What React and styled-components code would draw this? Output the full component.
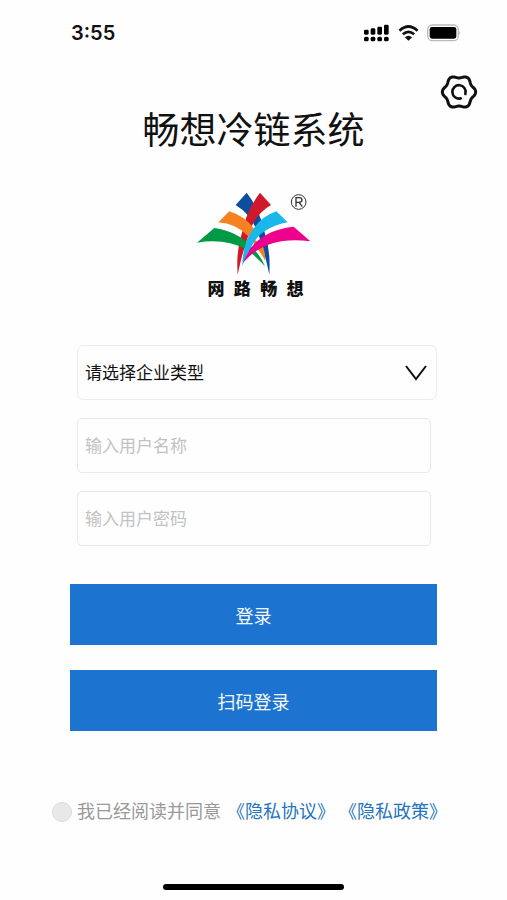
import React from "react";
import styled, { createGlobalStyle } from "styled-components";

const GlobalStyle = createGlobalStyle`
  * { box-sizing: border-box; }
  body {
    margin: 0;
    background: #fefefe;
    color: #111;
    font-family: "Liberation Sans", "Noto Sans CJK SC", sans-serif;
  }
  button, input, select { font: inherit; }
`;

const Screen = styled.div`
  display: flex;
  flex-direction: column;
  min-height: 100vh;
  padding-bottom: 10px;
`;

const StatusBar = styled.header`
  display: flex;
  align-items: center;
  justify-content: space-between;
  height: 66px;
  padding: 0 46px 0 71px;
`;

const Clock = styled.time`
  font: 600 20px/24px Inter, sans-serif;
`;

const StatusIcons = styled.div`
  display: flex;
  align-items: center;
  gap: 8px;
  svg { display: block; }
`;

const Toolbar = styled.div`
  display: flex;
  justify-content: flex-end;
  height: 46px;
  padding: 8px 29px 0;
`;

const IconButton = styled.button`
  width: 38px;
  height: 36px;
  padding: 0;
  border: 0;
  background: none;
  cursor: pointer;
  svg { display: block; }
`;

const Title = styled.h1`
  margin: 0;
  font-size: 37px;
  line-height: 40px;
  font-weight: 400;
  text-align: center;
`;

const Brand = styled.figure`
  display: flex;
  flex-direction: column;
  align-items: center;
  margin: 38px 0 0;
  height: 155px;
`;

const BrandName = styled.figcaption`
  display: flex;
  justify-content: space-between;
  width: 96px;
  margin-left: 4px;
  font-size: 17px;
  line-height: 20px;
  font-weight: 900;
`;

const Form = styled.form`
  display: flex;
  flex-direction: column;
  padding: 0 70px;
`;

const Fields = styled.div`
  display: flex;
  flex-direction: column;
  gap: 18px;
  padding-left: 7px;
`;

const SelectBox = styled.div`
  display: grid;
  align-items: center;
  > * { grid-area: 1 / 1; }
  svg {
    justify-self: end;
    margin-right: 10px;
    pointer-events: none;
  }
`;

const Select = styled.select`
  appearance: none;
  width: 100%;
  height: 55px;
  padding: 2px 40px 0 7px;
  border: 1px solid #ececec;
  border-radius: 6px;
  background: #fefefe;
  color: #111;
  font-size: 17px;
`;

const TextInput = styled.input`
  height: 55px;
  margin-right: 6px;
  padding: 3px 7px 0;
  border: 1px solid #e8e8e8;
  border-radius: 5px;
  background: #fefefe;
  font-size: 17px;
  &::placeholder { color: #c2c2c2; opacity: 1; }
`;

const Actions = styled.div`
  display: flex;
  flex-direction: column;
  gap: 25px;
  margin-top: 38px;
`;

const Button = styled.button`
  height: 61px;
  padding: 0;
  border: 0;
  background: #1c74d0;
  color: #f4f9ff;
  font-size: 18px;
  cursor: pointer;
`;

const Agreement = styled.div`
  display: flex;
  align-items: center;
  margin-top: 68px;
  padding-left: 52px;
  font-size: 18px;
  line-height: 26px;
  white-space: nowrap;
`;

const AgreeLabel = styled.label`
  display: flex;
  align-items: center;
  gap: 5px;
  margin-right: 6px;
  color: #999;
`;

const AgreeCheck = styled.input`
  appearance: none;
  width: 20px;
  height: 20px;
  margin: 0;
  border: 1px solid #dcdcdc;
  border-radius: 50%;
  background: #e8e8e8;
  &:checked { background: #1c74d0; }
`;

const Link = styled.a`
  color: #2474c0;
  text-decoration: none;
  & + & { margin-left: 4px; }
`;

const HomeIndicator = styled.div`
  width: 181px;
  height: 6px;
  margin: auto auto 0;
  border-radius: 3px;
  background: #000;
`;

const gearOutline =
  "M" +
  Array.from({ length: 120 }, (_, i) => {
    const a = (i / 120) * Math.PI * 2;
    const r = 46 + 4 * Math.cos(6 * a);
    return `${(r * Math.cos(a)).toFixed(1)} ${(r * Math.sin(a)).toFixed(1)}`;
  }).join("L") +
  "Z";

function GearIcon() {
  return (
    <svg width="38" height="36" viewBox="-57 -54 114 108" fill="none" stroke="#111" strokeLinejoin="round" strokeLinecap="round" aria-hidden="true">
      <path d={gearOutline} strokeWidth="9" />
      <path d="M19 6A20 20 0 1 0 5 19" strokeWidth="8" />
    </svg>
  );
}

function SignalIcon() {
  return (
    <svg width="26" height="18" viewBox="0 0 78 54" aria-hidden="true">
      {[15, 19, 24, 30].map((h, i) => (
        <g key={h} transform={`translate(${i * 20} 0)`}>
          <rect y={32 - h} width="14" height={h} rx="4" />
          <rect y="38" width="14" height="14" rx="5" />
        </g>
      ))}
    </svg>
  );
}

function WifiIcon() {
  return (
    <svg width="21" height="16" viewBox="0 0 60 48" fill="none" stroke="#111" strokeWidth="8" aria-hidden="true">
      <path d="M3 17Q30 -8 57 17" />
      <path d="M13 28Q30 13 47 28" />
      <path d="M19 37Q30 27 41 37L30 47Z" fill="#111" stroke="none" />
    </svg>
  );
}

function BatteryIcon() {
  return (
    <svg width="34" height="18" viewBox="0 0 102 54" aria-hidden="true">
      <rect x="2" y="3" width="92" height="47" rx="14" fill="#fff" stroke="#bbb" strokeWidth="4" />
      <rect x="8" y="9" width="80" height="35" rx="7" />
      <path d="M97 20q5 7 0 14z" fill="#aaa" />
    </svg>
  );
}

function ChevronIcon() {
  return (
    <svg width="22" height="16" viewBox="0 0 22 16" fill="none" stroke="#111" strokeWidth="2" aria-hidden="true">
      <path d="M1 1L11 14L21 1" />
    </svg>
  );
}

function BrandLogo() {
  return (
    <svg width="118" height="90" viewBox="46 30 354 270" role="img" aria-label="网路畅想">
      <path d="M168 75L201 38Q239 85 257 165Q273 215 269 284Q257 225 237 165Q217 105 168 75Z" fill="#0c4da2" />
      <path d="M274 75L241 38Q213 75 199 115Q194 140 185 165Q169 215 174 284Q186 225 205 170Q222 105 274 75Z" fill="#d0182b" />
      <path d="M116 127L149 94Q200 110 224 148L214 172L248 195Q258 215 256 242Q243 215 205 168Q168 130 116 127Z" fill="#f58220" />
      <path d="M52 188L104 144Q175 155 212 198Q243 225 256 259Q230 230 200 208Q135 174 52 188Z" fill="#009a44" />
      <path d="M290 94L324 127Q245 142 218 195Q198 230 188 257Q188 220 201 181Q230 115 290 94Z" fill="#1ab7ea" />
      <path d="M190 249Q203 215 225 190Q270 147 342 140L392 184Q260 165 190 249Z" fill="#ec008c" />
      <g fill="none" stroke="#333" strokeWidth="3">
        <circle cx="357" cy="66" r="22" />
        <path d="M349 80V53H359Q367 53 367 60T358 67H349M358 67L368 80" strokeWidth="4" />
      </g>
    </svg>
  );
}

export default function App() {
  return (
    <>
      <GlobalStyle />
      <Screen>
        <StatusBar>
          <Clock>3:55</Clock>
          <StatusIcons>
            <SignalIcon />
            <WifiIcon />
            <BatteryIcon />
          </StatusIcons>
        </StatusBar>
        <Toolbar>
          <IconButton type="button" aria-label="设置">
            <GearIcon />
          </IconButton>
        </Toolbar>
        <Title>畅想冷链系统</Title>
        <Brand>
          <BrandLogo />
          <BrandName>
            {[..."网路畅想"].map((c) => (
              <span key={c}>{c}</span>
            ))}
          </BrandName>
        </Brand>
        <Form onSubmit={(e) => e.preventDefault()}>
          <Fields>
            <SelectBox>
              <Select aria-label="企业类型" defaultValue="">
                <option value="">请选择企业类型</option>
              </Select>
              <ChevronIcon />
            </SelectBox>
            <TextInput type="text" placeholder="输入用户名称" aria-label="用户名称" />
            <TextInput type="password" placeholder="输入用户密码" aria-label="用户密码" />
          </Fields>
          <Actions>
            <Button type="submit">登录</Button>
            <Button type="button">扫码登录</Button>
          </Actions>
        </Form>
        <Agreement>
          <AgreeLabel>
            <AgreeCheck type="checkbox" />
            我已经阅读并同意
          </AgreeLabel>
          <Link href="#agreement">《隐私协议》</Link>
          <Link href="#policy">《隐私政策》</Link>
        </Agreement>
        <HomeIndicator />
      </Screen>
    </>
  );
}
